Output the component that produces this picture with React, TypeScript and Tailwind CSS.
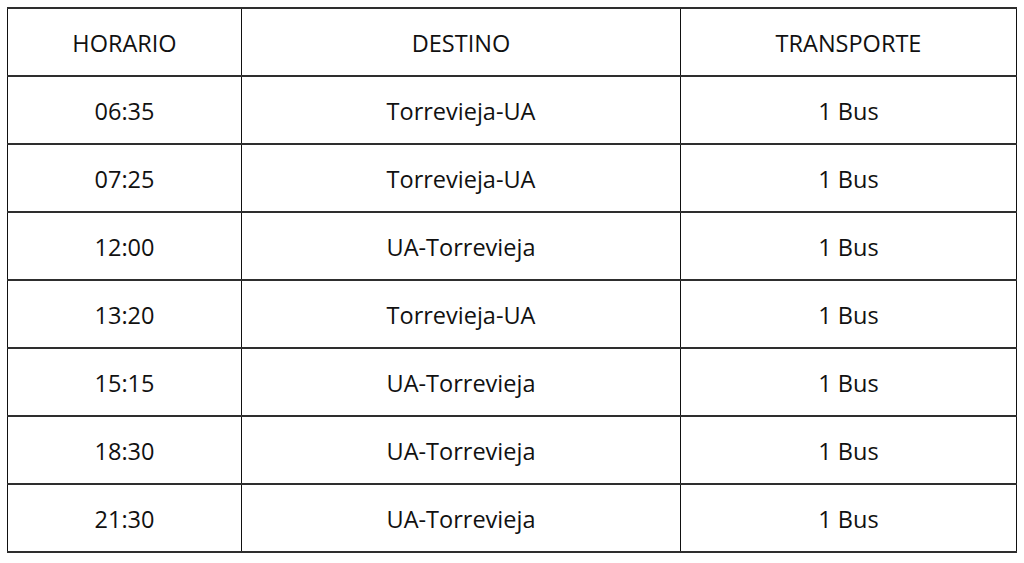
import React from 'react';

const rows = [
    { time: '06:35', dest: 'Torrevieja-UA', transport: '1 Bus' },
    { time: '07:25', dest: 'Torrevieja-UA', transport: '1 Bus' },
    { time: '12:00', dest: 'UA-Torrevieja', transport: '1 Bus' },
    { time: '13:20', dest: 'Torrevieja-UA', transport: '1 Bus' },
    { time: '15:15', dest: 'UA-Torrevieja', transport: '1 Bus' },
    { time: '18:30', dest: 'UA-Torrevieja', transport: '1 Bus' },
    { time: '21:30', dest: 'UA-Torrevieja', transport: '1 Bus' },
];

const cell =
    'border-x border-x-[#111] border-y-2 border-y-[#2e2e2e] h-[68px] p-0 pt-[3px] text-center align-middle font-normal leading-none';

const App: React.FC = () => (
    <div className="w-[1024px] h-[563px] bg-white pt-[7px] pl-[7px] font-['Open_Sans',sans-serif] text-[23.5px] text-[#111]">
        <table className="border-collapse table-fixed w-[1009px]">
            <colgroup>
                <col className="w-[234px]" />
                <col className="w-[439px]" />
                <col className="w-[336px]" />
            </colgroup>
            <thead>
                <tr>
                    <th className={cell}>HORARIO</th>
                    <th className={cell}>DESTINO</th>
                    <th className={cell}>TRANSPORTE</th>
                </tr>
            </thead>
            <tbody>
                {rows.map(r => (
                    <tr key={r.time}>
                        <td className={cell}>{r.time}</td>
                        <td className={cell}>{r.dest}</td>
                        <td className={cell}>{r.transport}</td>
                    </tr>
                ))}
            </tbody>
        </table>
    </div>
);

export default App;
